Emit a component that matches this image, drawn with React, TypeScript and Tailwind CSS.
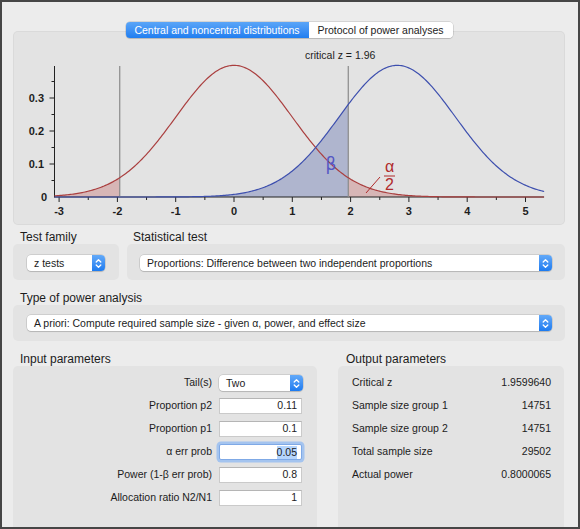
import React from "react"

// chart scale, in page coordinates
const UNIT = 58.3
const X0 = 234
const Y0 = 197
const YS = 330
const ZMIN = -3.08
const ZMAX = 5.32
const CRIT = 1.96
const DELTA = 2.8

const sx = (z: number) => X0 + z * UNIT
const sy = (p: number) => Y0 - p * YS
const pdf = (z: number, mu: number) => Math.exp(-((z - mu) ** 2) / 2) / Math.sqrt(2 * Math.PI)

function points(mu: number, a: number, b: number) {
  const n = Math.max(2, Math.ceil((b - a) * 40))
  const pts: string[] = []
  for (let i = 0; i <= n; i++) {
    const z = a + ((b - a) * i) / n
    pts.push(`${sx(z).toFixed(2)},${sy(pdf(z, mu)).toFixed(2)}`)
  }
  return pts
}
const linePath = (mu: number, a: number, b: number) => "M" + points(mu, a, b).join(" L")
const areaPath = (mu: number, a: number, b: number) =>
  `M${sx(a).toFixed(2)},${Y0} L` + points(mu, a, b).join(" L") + ` L${sx(b).toFixed(2)},${Y0} Z`

const inputs = [
  { label: "Proportion p2", value: "0.11" },
  { label: "Proportion p1", value: "0.1" },
  { label: "α err prob", value: "0.05", focused: true },
  { label: "Power (1-β err prob)", value: "0.8" },
  { label: "Allocation ratio N2/N1", value: "1" },
]

const outputs = [
  { label: "Critical z", value: "1.9599640" },
  { label: "Sample size group 1", value: "14751" },
  { label: "Sample size group 2", value: "14751" },
  { label: "Total sample size", value: "29502" },
  { label: "Actual power", value: "0.8000065" },
]

function Chart() {
  const majorX = [-3, -2, -1, 0, 1, 2, 3, 4, 5]
  const minorX = [-2.5, -1.5, -0.5, 0.5, 1.5, 2.5, 3.5, 4.5]
  const majorY = [0.1, 0.2, 0.3]
  const minorY = [0.05, 0.15, 0.25, 0.35]
  return (
    <svg width="552" height="194" viewBox="13 31 552 194" className="block">
      {/* shaded areas */}
      <path d={areaPath(DELTA, ZMIN, CRIT)} fill="#6f7cb3" fillOpacity="0.45" />
      <path d={areaPath(0, ZMIN, -CRIT)} fill="#c77e7e" fillOpacity="0.45" />
      <path d={areaPath(0, CRIT, ZMAX)} fill="#c77e7e" fillOpacity="0.45" />

      {/* axes */}
      <line x1="54.5" y1="66" x2="54.5" y2="197.5" stroke="#222" strokeWidth="1" />
      <line x1="54.5" y1="197" x2="544" y2="197" stroke="#222" strokeWidth="1" />
      {majorY.map((v) => (
        <line key={v} x1="49.5" y1={sy(v)} x2="54.5" y2={sy(v)} stroke="#222" strokeWidth="1" />
      ))}
      {minorY.map((v) => (
        <line key={v} x1="51.5" y1={sy(v)} x2="54.5" y2={sy(v)} stroke="#222" strokeWidth="1" />
      ))}
      {majorX.map((v) => (
        <line key={v} x1={sx(v)} y1="197" x2={sx(v)} y2="202" stroke="#222" strokeWidth="1" />
      ))}
      {minorX.map((v) => (
        <line key={v} x1={sx(v)} y1="197" x2={sx(v)} y2="200" stroke="#222" strokeWidth="1" />
      ))}

      {/* critical lines */}
      <line x1={sx(-CRIT)} y1="66" x2={sx(-CRIT)} y2="197" stroke="#8a8a8a" strokeWidth="1.2" />
      <line x1={sx(CRIT)} y1="66" x2={sx(CRIT)} y2="197" stroke="#8a8a8a" strokeWidth="1.2" />

      {/* curves */}
      <path d={linePath(0, ZMIN, ZMAX)} fill="none" stroke="#aa3f3f" strokeWidth="1.2" />
      <path d={linePath(DELTA, ZMIN, ZMAX)} fill="none" stroke="#3d4fae" strokeWidth="1.2" />

      {/* labels */}
      <g fontFamily="'Liberation Sans', Arial, sans-serif" fontSize="11" fontWeight="bold" fill="#1d1d1d">
        {majorY.map((v) => (
          <text key={v} x="44" y={sy(v) + 4} textAnchor="end">
            {v.toFixed(1)}
          </text>
        ))}
        <text x="44" y="201" textAnchor="middle">
          0
        </text>
        {majorX.map((v) => (
          <text key={v} x={sx(v)} y="215" textAnchor="middle">
            {v}
          </text>
        ))}
      </g>
      <text x="305" y="59" fontFamily="'Liberation Sans', Arial, sans-serif" fontSize="10.5" fill="#1d1d1d">
        critical z = 1.96
      </text>
      <text x="331" y="170" textAnchor="middle" fontFamily="'DejaVu Sans', sans-serif" fontSize="17" fill="#5457c4">
        β
      </text>
      <g fontFamily="'Liberation Sans', Arial, sans-serif" fontSize="16" fill="#b02b2b" textAnchor="middle">
        <text x="389.5" y="172">
          α
        </text>
        <text x="389.5" y="190">
          2
        </text>
      </g>
      <line x1="384" y1="176" x2="395" y2="176" stroke="#b02b2b" strokeWidth="1.2" />
      <line x1="366" y1="193" x2="380" y2="177" stroke="#b02b2b" strokeWidth="1" />
    </svg>
  )
}

function Popup({ text, className }: { text: string; className: string }) {
  return (
    <div
      className={`flex h-[16px] items-stretch rounded-[4px] bg-white shadow-[0_0_0_0.5px_rgba(0,0,0,0.18),0_1px_1px_rgba(0,0,0,0.12)] ${className}`}
    >
      <span className="flex-1 truncate pl-[7px] text-[10.5px] leading-[16px] text-[#1c1c1c]">{text}</span>
      <span className="flex w-[13px] items-center justify-center rounded-r-[4px] bg-linear-to-b from-[#62a9f8] to-[#1b7bf0]">
        <svg width="7" height="11" viewBox="0 0 7 11" fill="none" stroke="white" strokeWidth="1.3" strokeLinecap="round" strokeLinejoin="round">
          <path d="M1.2 4 L3.5 1.7 L5.8 4" />
          <path d="M1.2 7 L3.5 9.3 L5.8 7" />
        </svg>
      </span>
    </div>
  )
}

function Field({ value, focused }: { value: string; focused?: boolean }) {
  if (focused) {
    return (
      <div className="ml-[7px] flex h-[16px] w-[83px] items-center justify-end rounded-[2px] border border-[#7fa9e6] bg-white pr-[4px] shadow-[0_0_0_2.5px_#a4c4ef]">
        <span className="bg-[#b5d5fd] text-[10.5px] leading-[13px] text-[#1c1c1c]">{value}</span>
      </div>
    )
  }
  return (
    <div className="ml-[7px] flex h-[16px] w-[83px] items-center justify-end border border-[#cacaca] border-t-[#b5b5b5] bg-white pr-[4px] text-[10.5px] text-[#1c1c1c]">
      {value}
    </div>
  )
}

export default function App() {
  return (
    <div className="flex h-[529px] w-[580px] flex-col overflow-hidden border-2 border-[#464646] bg-[#ececec] pl-[11px] pr-[13px] pt-[20px] font-['Liberation_Sans',Arial,sans-serif] text-[#1c1c1c]">
      {/* Tabs */}
      <div className="relative z-10 flex h-[16px] justify-center">
        <div className="flex rounded-[4px] shadow-[0_0_0_0.5px_rgba(0,0,0,0.2),0_1px_1px_rgba(0,0,0,0.1)]">
          <div className="w-[183px] rounded-l-[4px] bg-linear-to-b from-[#5aa5f8] to-[#1f7ef0] text-center text-[10.5px] leading-[16px] text-white">
            Central and noncentral distributions
          </div>
          <div className="w-[144px] rounded-r-[4px] bg-white text-center text-[10.5px] leading-[16px] text-[#1c1c1c]">
            Protocol of power analyses
          </div>
        </div>
      </div>

      {/* Chart */}
      <div className="-mt-[7px] h-[194px] overflow-hidden rounded-[5px] border border-black/[0.04] bg-[#e3e3e3]">
        <div className="-ml-px -mt-px">
          <Chart />
        </div>
      </div>

      {/* Test family / statistical test */}
      <div className="mt-[5px] flex gap-[8px]">
        <div className="w-[106px]">
          <div className="h-[14px] pl-[7px] text-[12px] leading-[14px]">Test family</div>
          <div className="h-[36px] rounded-[5px] bg-[#e3e3e3] pl-[14px] pt-[11px]">
            <Popup text="z tests" className="w-[78px]" />
          </div>
        </div>
        <div className="flex-1">
          <div className="h-[14px] pl-[6px] text-[12px] leading-[14px]">Statistical test</div>
          <div className="h-[36px] rounded-[5px] bg-[#e3e3e3] px-[13px] pt-[11px]">
            <Popup text="Proportions: Difference between two independent proportions" className="w-full" />
          </div>
        </div>
      </div>

      {/* Type of power analysis */}
      <div className="mt-[11px] h-[14px] pl-[7px] text-[12px] leading-[14px]">Type of power analysis</div>
      <div className="h-[36px] rounded-[5px] bg-[#e3e3e3] pl-[14px] pr-[13px] pt-[10px]">
        <Popup text="A priori: Compute required sample size - given α, power, and effect size" className="w-full" />
      </div>

      {/* Parameters */}
      <div className="mt-[11px] flex flex-1 gap-[21px]">
        <div className="flex w-[304px] flex-col">
          <div className="h-[14px] pl-[7px] text-[12px] leading-[14px]">Input parameters</div>
          <div className="flex flex-1 flex-col gap-[7px] rounded-t-[5px] bg-[#e3e3e3] pt-[9px]">
            <div className="flex h-[16px] items-center">
              <div className="w-[199px] text-right text-[10.5px]">Tail(s)</div>
              <div className="ml-[7px]">
                <Popup text="Two" className="w-[84px]" />
              </div>
            </div>
            {inputs.map((row) => (
              <div key={row.label} className="flex h-[16px] items-center">
                <div className="w-[199px] text-right text-[10.5px]">{row.label}</div>
                <Field value={row.value} focused={row.focused} />
              </div>
            ))}
          </div>
        </div>
        <div className="flex w-[226px] flex-col">
          <div className="h-[14px] pl-[8px] text-[12px] leading-[14px]">Output parameters</div>
          <div className="flex flex-1 flex-col gap-[7px] rounded-t-[5px] bg-[#e3e3e3] pl-[14px] pr-[13px] pt-[9px]">
            {outputs.map((row) => (
              <div key={row.label} className="flex h-[16px] items-center justify-between text-[10.5px]">
                <span>{row.label}</span>
                <span>{row.value}</span>
              </div>
            ))}
          </div>
        </div>
      </div>
    </div>
  )
}
